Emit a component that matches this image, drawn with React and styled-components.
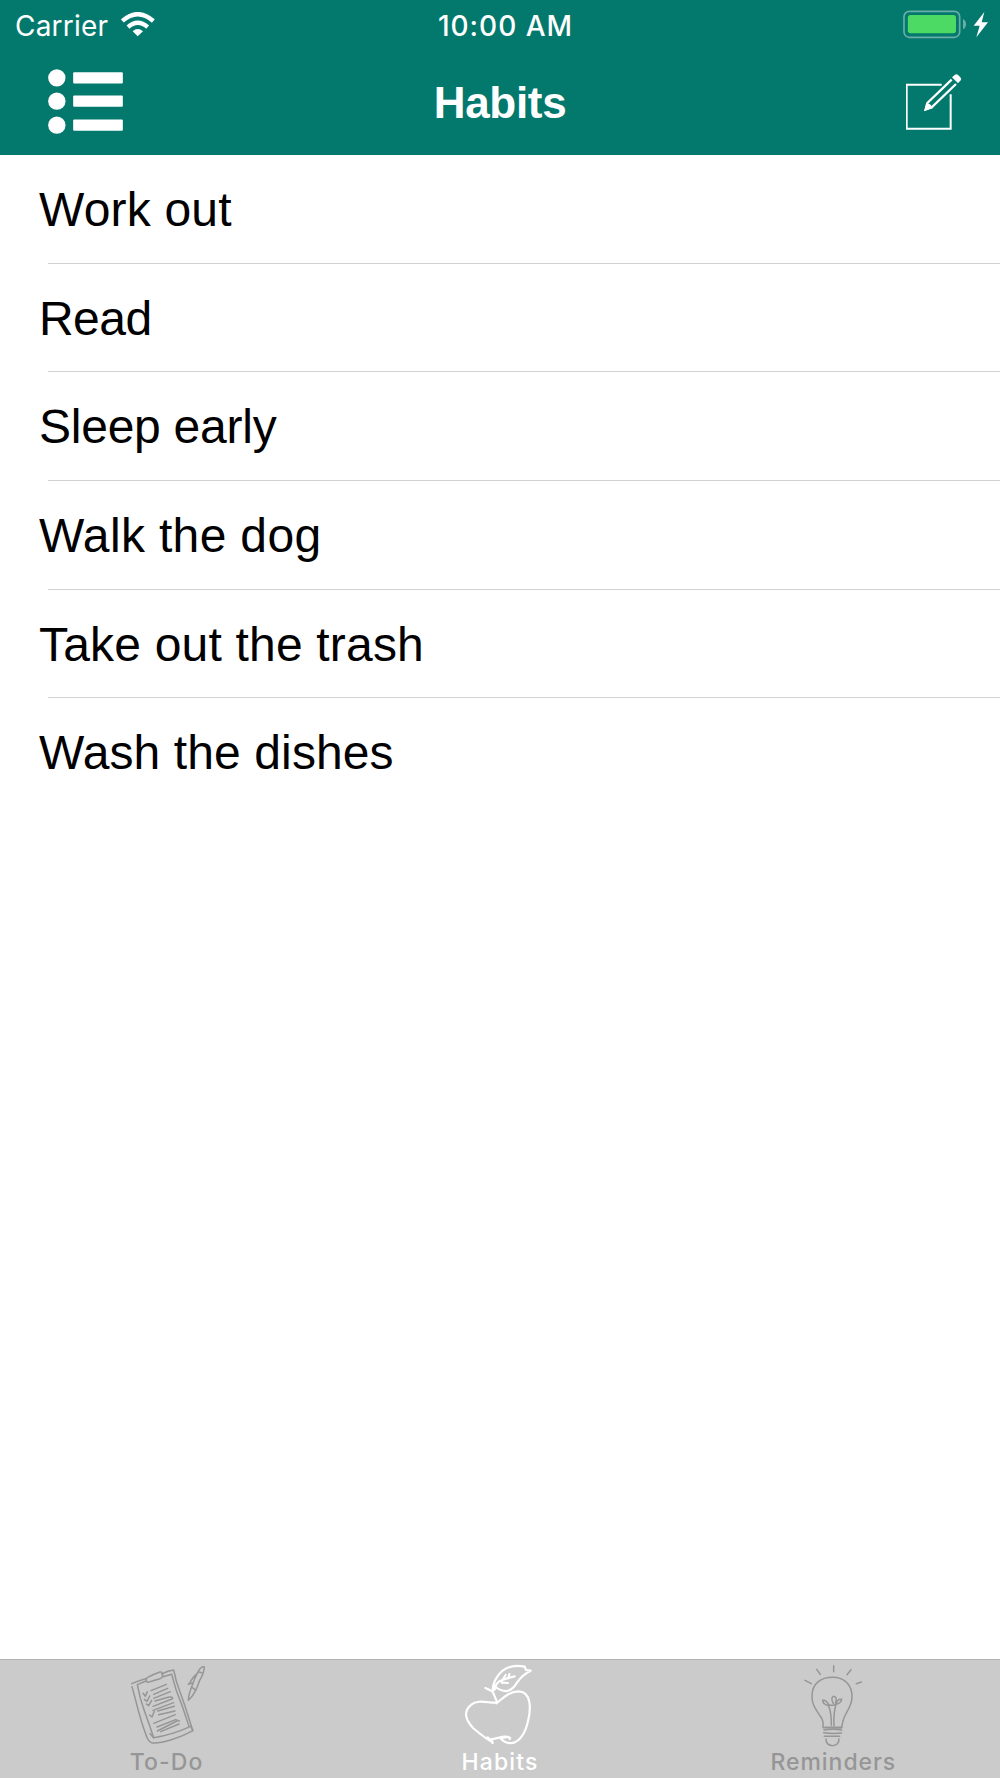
import React, { useState } from "react";
import styled, { createGlobalStyle } from "styled-components";

const habits = [
  { name: "Work out", spacing: "0.2px" },
  { name: "Read", spacing: "-0.55px" },
  { name: "Sleep early", spacing: "-0.25px" },
  { name: "Walk the dog", spacing: "0.34px" },
  { name: "Take out the trash", spacing: "0.19px" },
  { name: "Wash the dishes", spacing: "0.11px" },
];

function WifiIcon() {
  return (
    <svg width="34" height="25" viewBox="363 36 102 75" fill="none">
      <g stroke="#fff" strokeWidth="13">
        <path d="M367 63Q413 22 460 63" />
        <path d="M384 81.500Q413 55 443 81.500" />
      </g>
      <path d="M398 94Q413 80 429 94L413 109Z" fill="#fff" />
    </svg>
  );
}

function BatteryIcon() {
  return (
    <svg width="100" height="50" viewBox="120 0 300 150" fill="none">
      <rect
        x="132"
        y="34"
        width="167"
        height="78"
        rx="16"
        stroke="#68aea6"
        strokeWidth="5"
      />
      <rect x="143.500" y="45" width="144.500" height="54.500" rx="8" fill="#4cd964" />
      <path d="M309 57Q318 62 318 72.500T309 88Z" fill="#68aea6" />
      <path d="M373 36L341 77H359L349 112L384 67H365Z" fill="#fff" />
    </svg>
  );
}

function ListIcon() {
  return (
    <svg width="75" height="65" viewBox="144 207 225 195" fill="#fff">
      <circle cx="170.500" cy="233.500" r="26" />
      <circle cx="170.500" cy="303.500" r="26" />
      <circle cx="170.500" cy="375.500" r="26" />
      <rect x="219.500" y="216.500" width="149" height="34" rx="3" />
      <rect x="219.500" y="286.500" width="149" height="34" rx="3" />
      <rect x="219.500" y="358.500" width="149" height="34" rx="3" />
    </svg>
  );
}

function EditIcon() {
  return (
    <svg width="56" height="56" viewBox="138 220 168 168" fill="none">
      <path d="M245 252H140V384H272V281" stroke="#fff" strokeWidth="6" />
      <path
        d="M275 237L202 307L197 326L216 319L288 250"
        stroke="#fff"
        strokeWidth="7"
      />
      <path d="M199 307L193 331L220 322L210 311Z" fill="#fff" />
      <path
        d="M276 230L284 223Q289 219 294 223L301 230Q305 235 302 239L294 248Z"
        fill="#fff"
      />
    </svg>
  );
}

function TodoIcon() {
  return (
    <TabSvg viewBox="-10 30 360 264">
      {/* clipboard */}
      <path d="M64 101Q84 92 106 86M154 72Q174 62 190 60Q196 92 209 126T243 228L248 242Q218 259 181 270T124 278Q115 275 109 260Q94 221 83 178T65 110" />
      <path d="M107 93L81 104Q88 145 103 185T130 263Q184 255 241 229" />
      <path d="M158 80L184 73Q195 119 215 166L236 229M130 263L119 251M241 229L247 241" />
      <path d="M110 96Q105 86 112 82Q129 73 149 66Q156 64 157 77Q156 84 149 86Q130 91 113 97Z" />
      {/* check marks */}
      <path d="M98 130L105 139L111 125M102 148L110 154L118 138M108 162L115 167L124 151M118 195L125 201L132 184" />
      {/* written lines */}
      <path d="M122 122L168 103M130 133L172 115M130 145L180 125M134 153L176 141Q191 140 185 147L128 169M128 181L190 158M142 183L192 169M145 194L194 183M130 220L195 194M140 231L196 209L207 213M141 243L200 213M151 245L206 222" />
      {/* pen */}
      <path d="M264 64Q273 48 282 51Q281 70 268 91Q259 121 243 142L234 151Q235 132 245 108Q252 85 264 64ZM264 65L278 70M264 67Q244 85 239 98L234 103L246 99M246 113L254 119" />
    </TabSvg>
  );
}

function AppleIcon() {
  return (
    <TabSvg viewBox="0 30 360 264">
      <path
        d="M165 158C139 158 113 148 94 164C66 187 80 213 99 234C119 251 137 266 158 277L152 268C171 268 190 254 207 262Q213 263 209 267M169 160C188 146 205 125 235 124C275 124 273 178 264 214C256 248 245 269 222 278C203 282 190 274 183 267C189 261 199 261 207 262M143 262L158 279M172 158L158 125Q148 119 136 114M158 125C158 110 162 95 170 83C190 50 219 43 254 50L258 60L272 62C252 72 240 84 231 98C218 120 201 127 184 121Q171 117 164 107M164 119Q166 101 181 92Q205 83 224 79M184 95L197 75M186 98L204 99M205 85L208 72"
        strokeWidth="6.5"
      />
    </TabSvg>
  );
}

function BulbIcon() {
  return (
    <TabSvg viewBox="70 30 360 264">
      {/* rays */}
      <path d="M166 91L185 101M201 58L212 73M252 47V65M304 59L292 74M320 101L335 96" />
      <path d="M220 233Q223 213 212 199C198 177 186 163 187 138C187 100 214 82 249 82C285 82 308 106 307 142C306 176 283 189 279 218L275 234Z" />
      {/* filament */}
      <path d="M245 226Q246 193 237 167Q220 163 219 151Q230 149 237 164Q251 168 259 163Q274 159 276 148Q263 146 259 163Q251 190 253 227M251 160Q242 144 251 139Q265 141 257 159" />
      <path d="M225 232H277M223 240Q250 235 276 240M222 248Q249 252 275 249M224 259Q250 258 270 259M229 267C226 293 270 294 268 267" />
    </TabSvg>
  );
}

const tabs = [
  { name: "To-Do", icon: TodoIcon, spacing: "1.1px" },
  { name: "Habits", icon: AppleIcon, spacing: "1.1px" },
  { name: "Reminders", icon: BulbIcon, spacing: "0.95px" },
];

function App() {
  const [activeTab, setActiveTab] = useState("Habits");

  return (
    <Screen>
      <GlobalStyle />
      <Header>
        <StatusBar>
          <Carrier>
            <span>Carrier</span>
            <WifiIcon />
          </Carrier>
          <Time>10:00 AM</Time>
          <Battery>
            <BatteryIcon />
          </Battery>
        </StatusBar>
        <NavBar>
          <IconButton aria-label="Menu">
            <ListIcon />
          </IconButton>
          <Title>Habits</Title>
          <IconButton aria-label="New habit" $end>
            <EditIcon />
          </IconButton>
        </NavBar>
      </Header>

      <HabitList>
        {habits.map(({ name, spacing }) => (
          <HabitRow key={name} $spacing={spacing}>
            {name}
          </HabitRow>
        ))}
      </HabitList>

      <TabBar>
        {tabs.map(({ name, icon: Icon, spacing }) => (
          <Tab
            key={name}
            $active={name === activeTab}
            onClick={() => setActiveTab(name)}
          >
            <Icon />
            <TabLabel $spacing={spacing}>{name}</TabLabel>
          </Tab>
        ))}
      </TabBar>
    </Screen>
  );
}

export default App;

const GlobalStyle = createGlobalStyle`
  * {
    box-sizing: border-box;
  }
  body {
    margin: 0;
    background: #fff;
    font-family: "Liberation Sans", Arial, sans-serif;
  }
  svg {
    display: block;
    flex-shrink: 0;
  }
`;

const Screen = styled.div`
  display: flex;
  flex-direction: column;
  width: 100%;
  height: 1778px;
  background: #fff;
`;

const Header = styled.header`
  height: 155px;
  color: #fff;
  background: #03796e;
`;

const StatusBar = styled.div`
  display: grid;
  grid-template-columns: 1fr auto 1fr;
  height: 50px;
  font-family: Inter, sans-serif;
  font-size: 28px;
  line-height: 52px;
`;

const Carrier = styled.div`
  display: flex;
  align-items: flex-start;
  gap: 13px;
  padding-left: 15px;
  letter-spacing: 0.2px;

  svg {
    margin-top: 12px;
  }
`;

const Time = styled.div`
  padding-left: 11px;
  font-weight: 500;
  letter-spacing: 1px;
`;

const Battery = styled.div`
  display: flex;
  justify-content: flex-end;
`;

const NavBar = styled.nav`
  display: grid;
  grid-template-columns: 1fr auto 1fr;
  align-items: center;
  height: 105px;
  padding: 0 38px 2px 48px;
`;

const IconButton = styled.button`
  justify-self: ${(props) => (props.$end ? "end" : "start")};
  padding: 0;
  border: none;
  background: none;
  cursor: pointer;
`;

const Title = styled.h1`
  margin: 0;
  padding: 2px 10px 0 0;
  font-size: 44px;
  font-weight: bold;
  letter-spacing: -0.3px;
`;

const HabitList = styled.ul`
  flex: 1;
  margin: 0;
  padding: 0;
  list-style: none;
`;

const HabitRow = styled.li`
  height: 108.65px;
  padding-left: 39px;
  font-size: 48px;
  line-height: 109px;
  letter-spacing: ${(props) => props.$spacing};
  background: linear-gradient(#d2d2d4, #d2d2d4) 48px 100% / 100% 1px no-repeat;

  &:last-child {
    background: none;
  }
`;

const TabBar = styled.footer`
  display: grid;
  grid-template-columns: repeat(3, 1fr);
  height: 119px;
  border-top: 1px solid #b2b2b2;
  background: #cbcbcb;
`;

const Tab = styled.button`
  display: flex;
  flex-direction: column;
  align-items: center;
  padding: 0;
  border: none;
  background: none;
  color: ${(props) => (props.$active ? "#fff" : "#969696")};
  cursor: pointer;
`;

const TabSvg = styled.svg`
  width: 120px;
  height: 88px;
  fill: none;
  stroke: currentColor;
  stroke-width: 4.5;
  stroke-linecap: round;
  stroke-linejoin: round;
`;

const TabLabel = styled.span`
  font-family: Inter, sans-serif;
  font-size: 23px;
  font-weight: 500;
  line-height: 28px;
  letter-spacing: ${(props) => props.$spacing};
`;
